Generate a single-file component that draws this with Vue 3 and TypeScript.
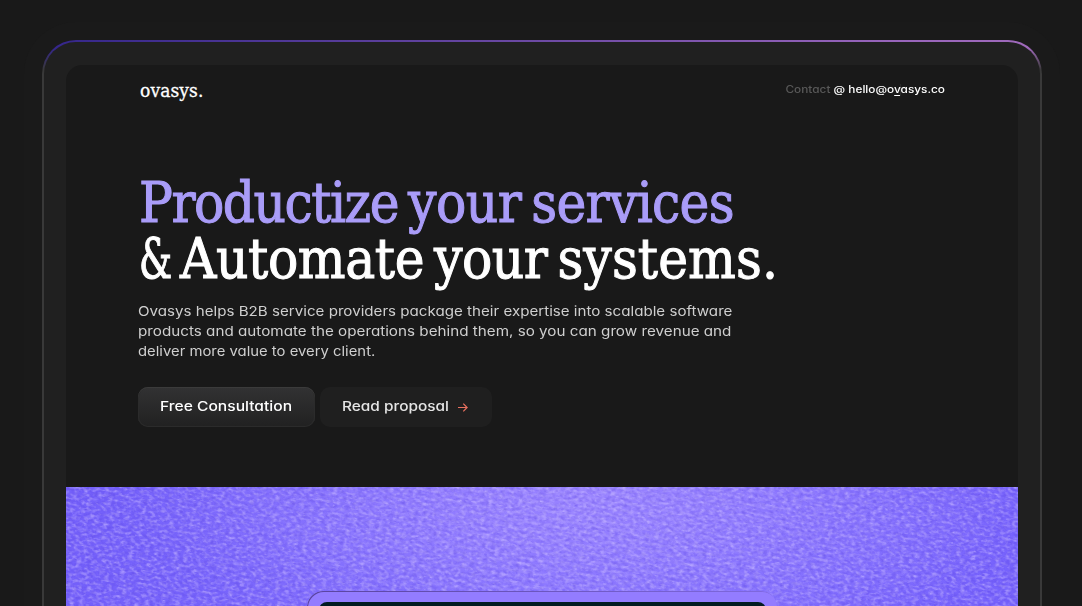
<script setup lang="ts">
const headline: string[][] = [
  ['Productize', 'your', 'services'],
  ['&', 'Automate', 'your', 'systems.'],
]
const intro: string[] = [
  'Ovasys helps B2B service providers package their expertise into scalable software',
  'products and automate the operations behind them, so you can grow revenue and',
  'deliver more value to every client.',
]
</script>

<template>
  <main class="stage">
    <div class="frame">
      <div class="bezel">
        <div class="screen">
          <header class="topbar">
            <a class="logo">ovasys.</a>
            <p class="contact"><span class="muted">Contact</span> @ hello@o<span class="mark">v</span>asys.co</p>
          </header>
          <section class="hero">
            <h1 class="headline">
              <span v-for="(words, i) in headline" :key="i" class="hline" :class="'h' + i">
                <span v-for="(word, j) in words" :key="word" :class="'w' + i + j">{{ word }}</span>
              </span>
            </h1>
            <p class="intro">
              <span v-for="(line, i) in intro" :key="line" class="iline" :class="'i' + i"><span>{{ line }}</span></span>
            </p>
            <div class="actions">
              <button class="btn primary"><span class="label">Free Consultation</span></button>
              <button class="btn secondary">
                <span class="label">Read proposal</span>
                <svg class="arrow" width="10" height="9" viewBox="0 0 10 9" fill="none" stroke="#e8705f" stroke-width="1.2">
                  <path d="M0 4.5H9M5.3 .7L9.1 4.5L5.3 8.3" />
                </svg>
              </button>
            </div>
          </section>
          <section class="showcase">
            <div class="ribs"></div>
            <svg class="fabric" width="1100" height="420">
              <filter id="weave" x="0" y="0" width="100%" height="100%" color-interpolation-filters="sRGB">
                <feTurbulence type="fractalNoise" baseFrequency="0.2 0.36" numOctaves="3" seed="8" />
                <feColorMatrix values="0 0 0 0 .79  0 0 0 0 .73  0 0 0 0 1  2.6 0 0 0 -1.1" />
              </filter>
              <filter id="shade" x="0" y="0" width="100%" height="100%" color-interpolation-filters="sRGB">
                <feTurbulence type="fractalNoise" baseFrequency="0.22 0.36" numOctaves="3" seed="21" />
                <feColorMatrix values="0 0 0 0 .34  0 0 0 0 .25  0 0 0 0 .86  2.6 0 0 0 -1.1" />
              </filter>
              <rect width="1100" height="420" filter="url(#weave)" opacity=".6" />
              <rect width="1100" height="420" filter="url(#shade)" opacity=".32" />
            </svg>
            <div class="device"><div class="display"></div></div>
          </section>
        </div>
      </div>
    </div>
  </main>
</template>

<style>
html,
body {
  background: #191919;
  overflow: hidden;
}
</style>

<style scoped>
.stage {
  box-sizing: border-box;
  width: 1082px;
  height: 606px;
  padding: 40px 40px 0 42px;
  overflow: hidden;
  background: #191919;
  font-family: Inter, 'Liberation Sans', sans-serif;
  font-feature-settings: 'cv11';
}
.frame {
  box-sizing: border-box;
  height: 640px;
  padding: 2px;
  border-radius: 34px;
  background:
    linear-gradient(to bottom, transparent 8px, #393939 30px),
    linear-gradient(to right, #34268a, #6d4aa4 50%, #9865bb 85%, #a06abb);
  box-shadow: 0 0 0 18px #1a1a1a;
}
.bezel {
  box-sizing: border-box;
  height: 100%;
  padding: 23px 22px 0;
  border-radius: 32px;
  background: #202020;
}
.screen {
  height: 600px;
  border-radius: 16px 16px 0 0;
  background: #191919;
  overflow: hidden;
}
.topbar {
  display: flex;
  justify-content: space-between;
  height: 50px;
  padding: 0 73px 0 74px;
}
.logo {
  margin-top: 13px;
  font: 19px/24px 'DejaVu Serif Condensed', 'DejaVu Serif', serif;
  font-stretch: condensed;
  letter-spacing: 0.1px;
  -webkit-text-stroke: 0.3px currentColor;
  color: #fff;
}
.contact {
  margin: 17px 0 0;
  font-size: 10px;
  line-height: 14px;
  font-weight: 500;
  color: #fff;
  transform: scaleX(1.182);
  transform-origin: right;
}
.muted {
  color: #595959;
}
.mark {
  box-shadow: 0 1px 0 #fff;
}
.hero {
  height: 372px;
  padding-left: 72px;
}
.headline {
  margin: 0;
  padding: 60px 0 0 1px;
  font: 400 56px/56px 'DejaVu Serif Condensed', 'DejaVu Serif', serif;
  font-stretch: condensed;
  -webkit-text-stroke: 1px currentColor;
  color: #fff;
  white-space: nowrap;
}
.hline {
  display: flex;
  gap: 10px;
}
.h0 {
  color: #a99cf8;
}
.w00 {
  letter-spacing: -1.5px;
}
.w01,
.w12 {
  letter-spacing: -0.5px;
}
.w02 {
  letter-spacing: -0.7px;
}
.w10 {
  width: 31px;
  transform: scaleX(0.74);
  transform-origin: left;
}
.w11 {
  letter-spacing: -0.4px;
}
.w13 {
  letter-spacing: 0.1px;
}
.intro {
  margin: 14px 0 0;
  font-size: 13px;
  line-height: 20px;
  color: #cfcfcf;
  white-space: nowrap;
}
.iline {
  display: block;
}
.iline > span {
  display: inline-block;
  transform-origin: left;
}
.i0 > span {
  transform: scaleX(1.164);
}
.i1 > span {
  transform: scaleX(1.171);
}
.i2 > span {
  transform: scaleX(1.142);
}
.actions {
  display: flex;
  gap: 5px;
  margin-top: 26px;
}
.btn {
  box-sizing: border-box;
  display: flex;
  align-items: center;
  justify-content: center;
  height: 40px;
  padding: 0 0 2px;
  border: 0;
  border-radius: 10px;
  font: 500 13px/20px Inter, sans-serif;
  font-feature-settings: 'cv11';
  color: #fff;
}
.primary {
  width: 177px;
  background: linear-gradient(#323233, #212121);
  box-shadow: inset 0 1px 0 #3b3b3b, inset 0 0 0 1px #2b2b2b;
}
.secondary {
  width: 172px;
  padding-left: 22px;
  justify-content: flex-start;
  background: #1f1f1f;
  color: #e4e4e4;
}
.label {
  transform: scaleX(1.2);
}
.secondary .label {
  width: 116px;
  text-align: left;
  transform-origin: left;
  transform: scaleX(1.185);
}
.arrow {
  margin-top: 3px;
}
.showcase {
  position: relative;
  height: 180px;
  overflow: hidden;
  background:
    radial-gradient(ellipse 460px 180px at 55% 0, #9a84ff, transparent),
    linear-gradient(to right, #7460fa, #806dff 50%, #7662fc);
}
.ribs {
  position: absolute;
  inset: 0;
  background: repeating-linear-gradient(190deg, #b09eff66 0 1px, transparent 3px 5px, #b09eff66 7px);
  mask-image: radial-gradient(ellipse 400px 170px at 55% 20%, #000, transparent);
}
.fabric {
  position: absolute;
  left: -70px;
  top: -120px;
  transform: rotate(10deg);
}
.device {
  position: absolute;
  box-sizing: border-box;
  left: 241px;
  top: 104px;
  width: 470px;
  height: 100px;
  padding: 11px 11px 0 12px;
  border-radius: 16px;
  background: #937cff;
}
.device::before {
  content: '';
  position: absolute;
  inset: 0;
  border-radius: inherit;
  box-shadow: inset 1px 1px 0 #5a449f;
  mask-image: linear-gradient(to right, #000, #0005);
}
.display {
  height: 80px;
  border-radius: 8px;
  background: #021b22;
}
</style>
